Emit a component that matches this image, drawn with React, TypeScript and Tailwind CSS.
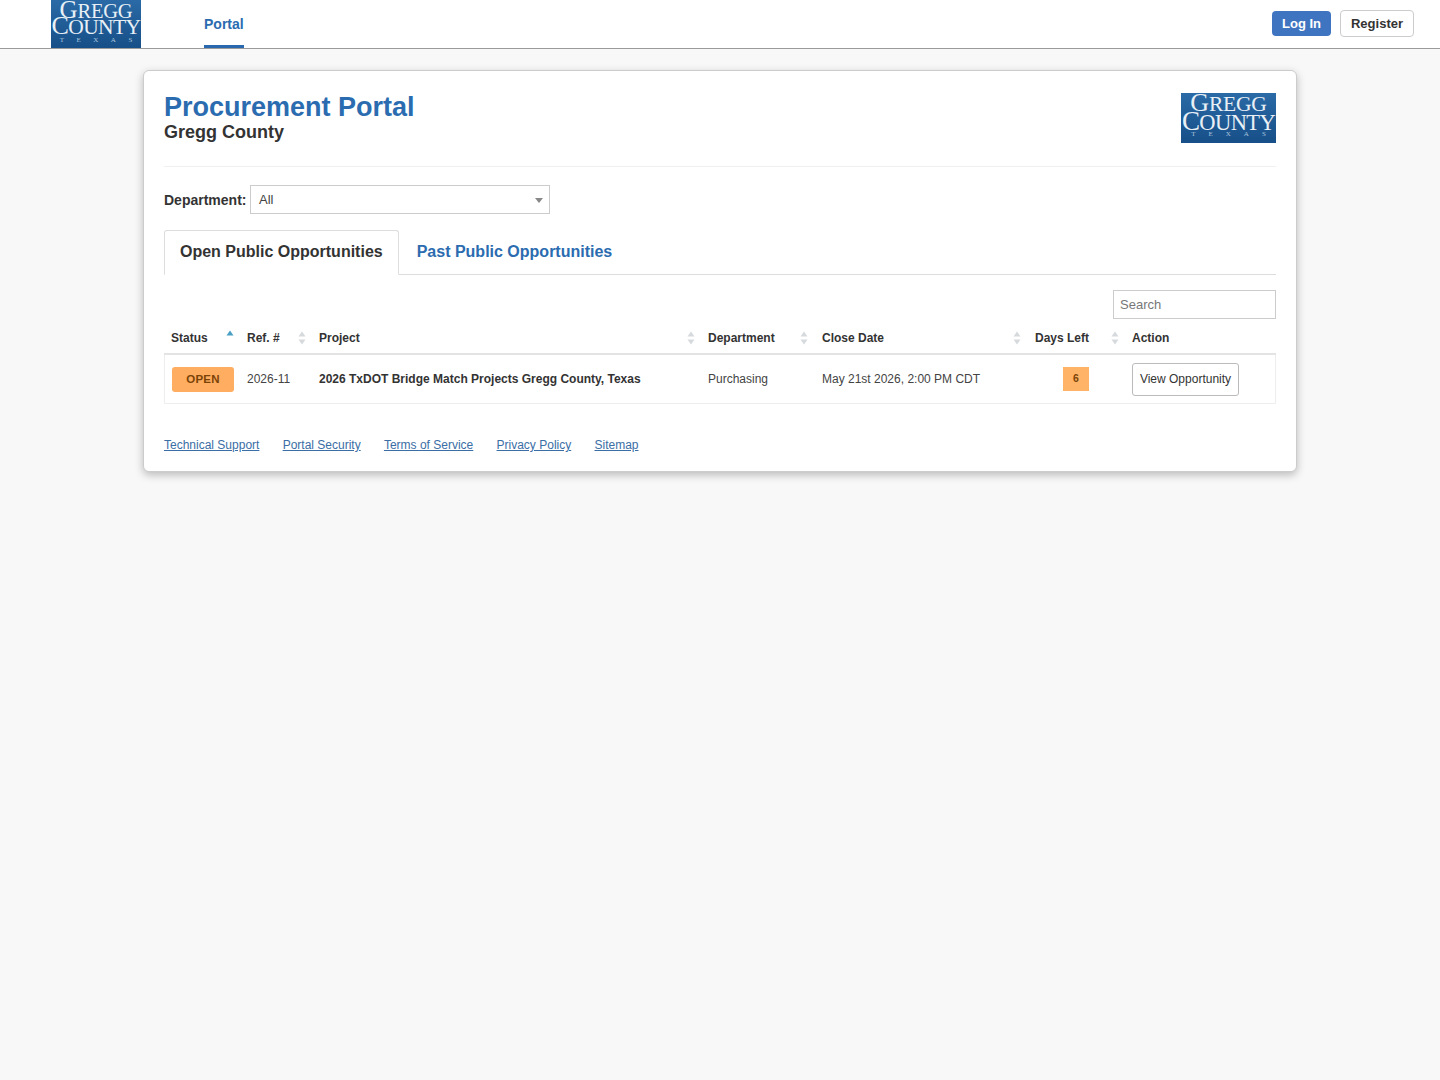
import React from "react";

function CountyLogo({ small }: { small?: boolean }) {
  return (
    <div
      className={
        small
          ? "w-[90px] h-[48px] shrink-0 flex flex-col items-center bg-gradient-to-b from-[#2a6aa6] to-[#174f88] text-[#e8f0f6] [font-family:'Liberation_Serif',serif]"
          : "w-[95px] h-[50px] shrink-0 flex flex-col items-center bg-gradient-to-b from-[#2a6aa6] to-[#174f88] text-[#e8f0f6] [font-family:'Liberation_Serif',serif]"
      }
    >
      <div className={small ? "text-[25px] leading-[16px] h-[16px] mt-[2px] tracking-[-0.2px] whitespace-nowrap" : "text-[26px] leading-[18px] h-[18px] mt-[1px] tracking-[-0.2px] whitespace-nowrap"}>
        G<span className={small ? "text-[20.5px]" : "text-[21.5px]"}>REGG</span>
      </div>
      <div className={small ? "text-[26px] leading-[15px] h-[15px] tracking-[-0.6px] whitespace-nowrap" : "text-[27px] leading-[18px] h-[18px] tracking-[-0.6px] whitespace-nowrap"}>
        C<span className={small ? "text-[21.5px]" : "text-[22.5px]"}>OUNTY</span>
      </div>
      <div className={small ? "text-[7px] leading-[7px] mt-[4px] tracking-[12.5px] pl-[12.5px] text-[#a9c6de] whitespace-nowrap" : "text-[7px] leading-[7px] mt-[1px] tracking-[13px] pl-[13px] text-[#a9c6de] whitespace-nowrap"}>TEXAS</div>
    </div>
  );
}

function SortIcon({ active }: { active?: boolean }) {
  return (
    <svg width="8" height="14" viewBox="0 0 8 14" className="shrink-0">
      <path d="M4 0.5 L7.5 5.5 H0.5 Z" fill={active ? "#4a9fc4" : "#d6dadd"} />
      {!active && <path d="M4 13.5 L7.5 8.5 H0.5 Z" fill="#d6dadd" />}
    </svg>
  );
}

function HeadCell({ label, width, active, noSort, iconClass }: { label: string; width: string; active?: boolean; noSort?: boolean; iconClass?: string }) {
  return (
    <th className={width + " px-[7px] pb-[8px] pt-[11px] text-left font-bold border-b-2 border-[#e3e3e3]"}>
      <div className="flex justify-between items-center text-[12px] text-[#333] h-[14px]">
        <span>{label}</span>
        {!noSort && <span className={(iconClass ?? "mr-[-1px]") + (active ? " -mt-[2px] flex" : " flex")}><SortIcon active={active} /></span>}
      </div>
    </th>
  );
}

const footerLinks = ["Technical Support", "Portal Security", "Terms of Service", "Privacy Policy", "Sitemap"];

export default function App() {
  return (
    <div className="min-h-[1080px] bg-[#f8f8f8] [font-family:'Liberation_Sans',Arial,sans-serif] text-[#333]">
      {/* top nav */}
      <header className="h-[49px] bg-white border-b border-[#9a9a9a] flex items-start pl-[51px] pr-[26px]">
        <CountyLogo small />
        <nav className="ml-[63px] h-[48px] flex flex-col justify-between">
          <a className="text-[14px] font-bold text-[#2b6cb0] leading-[16px] mt-[16px]">Portal</a>
          <div className="h-[3px] bg-[#2a68ae]" />
        </nav>
        <div className="ml-auto flex items-center gap-[9px] mt-[10px]">
          <button className="h-[25px] w-[59px] rounded-[4px] bg-[#3f75c0] text-white text-[13px] font-bold">Log In</button>
          <button className="h-[27px] w-[74px] rounded-[4px] bg-white border border-[#ccc] text-[#333] text-[13px] font-bold">Register</button>
        </div>
      </header>

      {/* main card */}
      <main className="w-[1154px] mx-auto mt-[21px] h-[402px] bg-white border border-[#ccc] rounded-[6px] shadow-[0_3px_8px_rgba(0,0,0,0.25)] px-[20px] pt-[22px]">
        <div className="flex justify-between items-start h-[74px] border-b border-[#f0f0f0]">
          <div>
            <h1 className="text-[27px] font-bold text-[#2b6cb0] leading-[28px]">Procurement Portal</h1>
            <h2 className="text-[18px] font-bold text-[#333] leading-[22px]">Gregg County</h2>
          </div>
          <CountyLogo />
        </div>

        <div className="flex items-center mt-[18px]">
          <label className="text-[14px] font-bold text-[#333] w-[86px] pt-[1px]">Department:</label>
          <div className="w-[300px] h-[29px] border border-[#ccc] flex items-center justify-between pl-[8px] pr-[6px] text-[13px] text-[#444]">
            <span>All</span>
            <span className="w-0 h-0 border-x-[4px] border-x-transparent border-t-[5px] border-t-[#888] mt-[2px]" />
          </div>
        </div>

        <div className="flex mt-[16px] h-[45px] border-b border-[#ddd]">
          <div className="h-[45px] px-[15px] pb-[2px] border border-[#ddd] border-b-white rounded-t-[3px] bg-white flex items-center text-[16px] font-bold text-[#333]">
            Open Public Opportunities
          </div>
          <div className="h-[44px] pl-[18px] flex items-center text-[16px] font-bold text-[#2b6cb0]">Past Public Opportunities</div>
        </div>

        <div className="flex justify-end mt-[15px]">
          <input
            placeholder="Search"
            className="w-[163px] h-[29px] border border-[#ccc] px-[6px] text-[13px] placeholder:text-[#777] outline-none"
          />
        </div>

        <table className="w-[1112px] table-fixed border-separate border-spacing-0 mt-[1px]">
          <thead>
            <tr>
              <HeadCell label="Status" width="w-[76px]" active />
              <HeadCell label="Ref. #" width="w-[72px]" />
              <HeadCell label="Project" width="w-[389px]" />
              <HeadCell label="Department" width="w-[114px]" iconClass="mr-0" />
              <HeadCell label="Close Date" width="w-[213px]" iconClass="mr-0" />
              <HeadCell label="Days Left" width="w-[97px]" />
              <HeadCell label="Action" width="w-[151px]" noSort />
            </tr>
          </thead>
          <tbody>
            <tr className="h-[49px] text-[12px] text-[#333]">
              <td className="pl-[7px] border-b border-l border-[#eee]">
                <span className="flex items-center justify-center w-[62px] h-[25px] pt-[1px] rounded-[3px] bg-[#ffad60] text-[#7a4408] text-[11.5px] font-bold tracking-[0.2px]">OPEN</span>
              </td>
              <td className="px-[7px] text-[#444] border-b border-[#eee]">2026-11</td>
              <td className="px-[7px] font-bold border-b border-[#eee]">2026 TxDOT Bridge Match Projects Gregg County, Texas</td>
              <td className="px-[7px] text-[#444] border-b border-[#eee]">Purchasing</td>
              <td className="px-[7px] text-[#444] border-b border-[#eee]">May 21st 2026, 2:00 PM CDT</td>
              <td className="px-[7px] border-b border-[#eee]">
                <span className="flex items-center justify-center w-[26px] h-[24px] ml-[28px] bg-[#ffb366] text-[#7a4408] text-[10.5px] font-bold">6</span>
              </td>
              <td className="px-[7px] border-b border-r border-[#eee]">
                <button className="h-[33px] w-[107px] rounded-[3px] border border-[#bbb] bg-white text-[12px] text-[#333]">View Opportunity</button>
              </td>
            </tr>
          </tbody>
        </table>

        <footer className="flex gap-[23.25px] mt-[35px] text-[12px] text-[#3a6ea5]">
          {footerLinks.map((l) => (
            <a key={l} className="underline leading-[13px]">{l}</a>
          ))}
        </footer>
      </main>
    </div>
  );
}
